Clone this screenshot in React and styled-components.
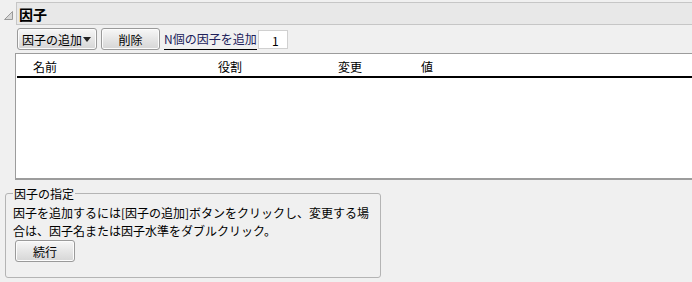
import React from "react"
import styled, { createGlobalStyle } from "styled-components"

const GlobalStyle = createGlobalStyle`
    body {
        margin: 0;
        background: #f0f0f0;
        font-family: "Noto Sans CJK JP", "Noto Sans", sans-serif;
        font-size: 12px;
        color: #000;
    }
`
const Page = styled.div`
    width: 692px;
    height: 282px;
    overflow: hidden;
`
const HeaderRow = styled.div`
    display: flex;
    align-items: flex-start;
    padding-top: 2px;
`
const Disclosure = styled.svg`
    width: 16px;
    height: 22px;
    flex: none;
`
const HeaderBar = styled.div`
    flex: 1;
    height: 21px;
    background: #e8e8e8;
    border: 1px solid #c6c6c6;
    border-right: none;
    display: flex;
    align-items: center;
    padding-left: 2px;
`
const Title = styled.h1`
    margin: 0;
    font-size: 14px;
    font-weight: bold;
    line-height: 1;
`
const Toolbar = styled.div`
    display: flex;
    align-items: center;
    gap: 4px;
    margin: 3px 0 0 17px;
    height: 22px;
`
const Button = styled.button`
    height: 22px;
    width: ${p => p.$w}px;
    padding: 0 4px;
    font-family: inherit;
    font-size: 12px;
    color: #000;
    border: 1px solid #9a9a9a;
    border-radius: 3px;
    background: linear-gradient(#f7f7f7, #e4e4e4 55%, #d6d6d6);
    display: flex;
    align-items: center;
    justify-content: ${p => (p.$left ? "space-between" : "center")};
    box-shadow: inset 0 0 0 1px #fcfcfc;
`
const Caret = styled.span`
    width: 0;
    height: 0;
    border-left: 4px solid transparent;
    border-right: 4px solid transparent;
    border-top: 5px solid #222;
    margin-right: 1px;
`
const LinkLabel = styled.span`
    color: #20205a;
    border-bottom: 1px solid #000;
    line-height: 20px;
    height: 20px;
`
const NumberBox = styled.div`
    width: 30px;
    height: 19px;
    margin-left: -3px;
    background: #fff;
    border: 1px solid #d0d0d0;
    text-align: right;
    padding-right: 8px;
    box-sizing: border-box;
    line-height: 19px;
`
const Table = styled.div`
    margin: 3px 0 0 15px;
    height: 124px;
    background: #fff;
    border-top: 1px solid #9c9c9c;
    border-left: 1px solid #9c9c9c;
    border-bottom: 2px solid #9c9c9c;
`
const HeadRow = styled.div`
    display: grid;
    grid-template-columns: 185px 120px 83px 1fr;
    margin-left: 1px;
    padding: 5px 0 0 16px;
    height: 17px;
    border-bottom: 2px solid #000;
    line-height: 16px;
`
const Group = styled.fieldset`
    margin: 6px 0 0 5px;
    width: 376px;
    height: 92px;
    box-sizing: border-box;
    border: 1px solid #b4b4b4;
    border-radius: 3px;
    padding: 0 0 0 7px;
`
const Legend = styled.legend`
    padding: 0 1px;
    font-size: 12px;
    line-height: 15px;
`
const Note = styled.p`
    margin: 3px 0 0;
    line-height: 18px;
    width: 362px;
`
const ContinueButton = styled(Button)`
    margin-left: 2px;
`

export default function App() {
    return (
        <Page>
            <GlobalStyle />
            <HeaderRow>
                <Disclosure viewBox="0 0 16 22">
                    <polygon points="4.5,17.5 12.5,17.5 12.5,9.5" fill="#d8d8d8" stroke="#9a9a9a" strokeWidth="1" />
                </Disclosure>
                <HeaderBar>
                    <Title>因子</Title>
                </HeaderBar>
            </HeaderRow>
            <Toolbar>
                <Button $w={80} $left>
                    因子の追加
                    <Caret />
                </Button>
                <Button $w={59}>削除</Button>
                <LinkLabel>N個の因子を追加</LinkLabel>
                <NumberBox>1</NumberBox>
            </Toolbar>
            <Table>
                <HeadRow>
                    <span>名前</span>
                    <span>役割</span>
                    <span>変更</span>
                    <span>値</span>
                </HeadRow>
            </Table>
            <Group>
                <Legend>因子の指定</Legend>
                <Note>
                    因子を追加するには[因子の追加]ボタンをクリックし、変更する場合は、因子名または因子水準をダブルクリック。
                </Note>
                <ContinueButton $w={60}>続行</ContinueButton>
            </Group>
        </Page>
    )
}
